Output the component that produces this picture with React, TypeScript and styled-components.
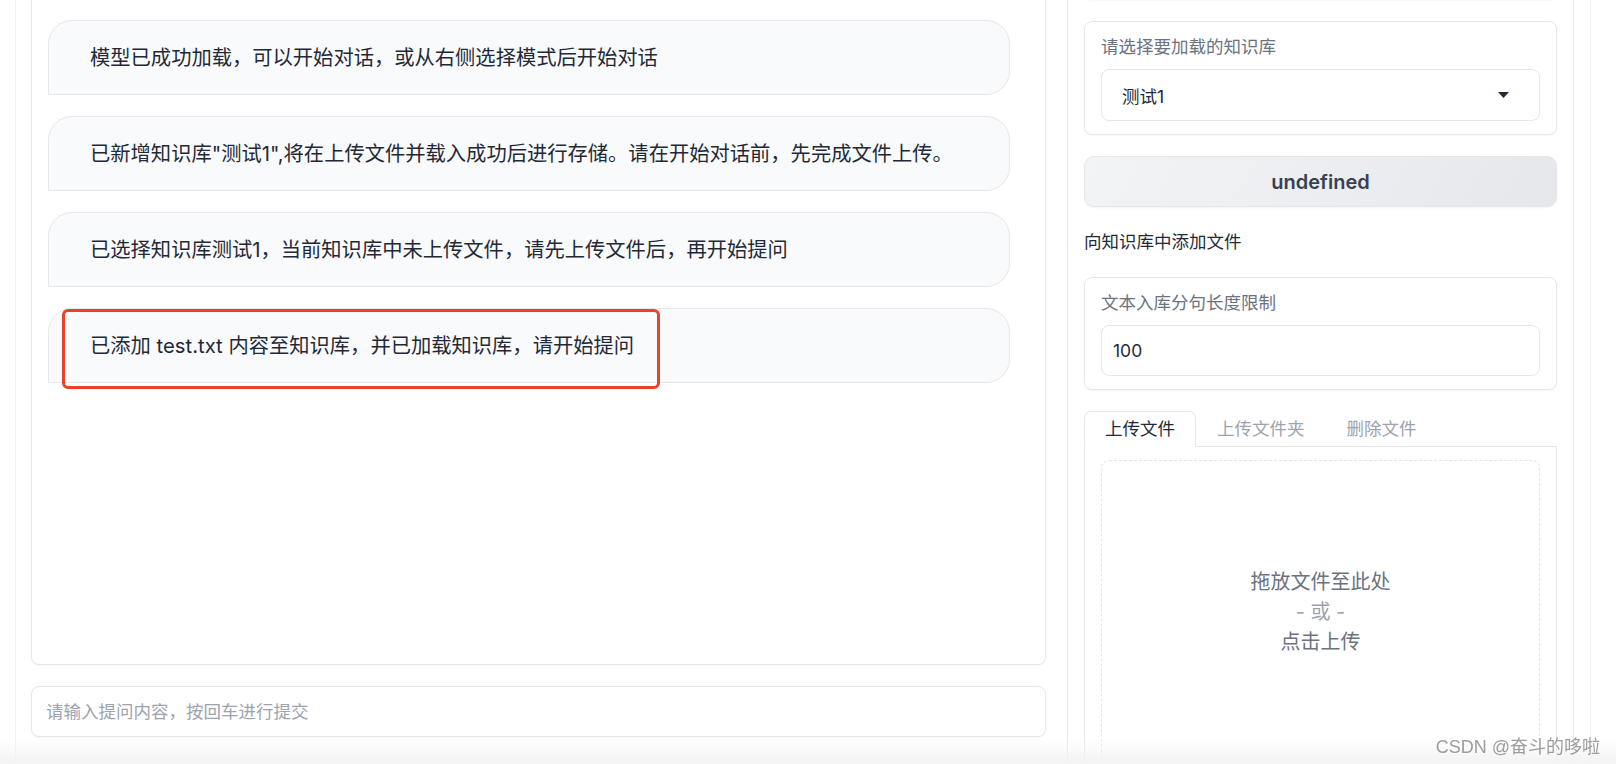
import React from 'react';
import styled, {createGlobalStyle} from 'styled-components';

const GlobalStyle = createGlobalStyle`
  html, body {
    margin: 0;
    overflow: hidden;
    background: #ffffff;
  }
  body {
    font-family: Inter, "Noto Sans CJK SC", sans-serif;
    color: #1f2937;
  }
`;

const messages = [
  '模型已成功加载，可以开始对话，或从右侧选择模式后开始对话',
  '已新增知识库"测试1",将在上传文件并载入成功后进行存储。请在开始对话前，先完成文件上传。',
  '已选择知识库测试1，当前知识库中未上传文件，请先上传文件后，再开始提问',
  '已添加 test.txt 内容至知识库，并已加载知识库，请开始提问',
];

const tabs = ['上传文件', '上传文件夹', '删除文件'];

const Page = styled.div`
  display: flex;
  gap: 21px;
  margin: -38px 25px 0 15px;
  padding: 0 16px 40px 15px;
  border-left: 1px solid #eef0f3;
  border-right: 1px solid #eef0f3;
`;

const ChatColumn = styled.div`
  flex: 1;
  min-width: 0;
  display: flex;
  flex-direction: column;
  gap: 21px;
`;

const ChatPanel = styled.div`
  height: 703px;
  box-sizing: border-box;
  display: flex;
  flex-direction: column;
  gap: 21px;
  padding: 57px 35px 16px 16px;
  border: 1px solid #e5e7eb;
  border-radius: 8px;
  background: #fff;
  box-shadow: 0 1px 2px rgba(0, 0, 0, 0.04);
`;

const Bubble = styled.div`
  position: relative;
  min-width: 0;
  padding: 21px 30px 21px 41px;
  font-size: 20.3px;
  line-height: 31px;
  white-space: nowrap;
  color: #1f2937;
  background: #f9fafb;
  border: 1px solid #e5e7eb;
  border-radius: 24px 24px 24px 0;
`;

const Highlight = styled.div`
  position: absolute;
  left: 13px;
  top: 0;
  width: 598px;
  height: 80px;
  box-sizing: border-box;
  border: 3px solid #e8412c;
  border-radius: 6px;
  pointer-events: none;
`;

const PromptInput = styled.input`
  height: 51px;
  box-sizing: border-box;
  padding: 0 14px;
  font: inherit;
  font-size: 17.5px;
  color: #1f2937;
  border: 1px solid #e5e7eb;
  border-radius: 8px;
  outline: none;
  box-shadow: 0 1px 2px rgba(0, 0, 0, 0.04);

  &::placeholder {
    color: #9ca3af;
  }
`;

const SideColumn = styled.div`
  width: 507px;
  flex-shrink: 0;
  box-sizing: border-box;
  display: flex;
  flex-direction: column;
  gap: 21px;
  padding: 16px;
  border: 1px solid #e5e7eb;
  border-radius: 8px;
  background: #fff;
`;

const StubCard = styled.div`
  height: 21px;
  box-sizing: border-box;
  border: 1px solid #e5e7eb;
  border-radius: 8px;
  box-shadow: 0 1px 2px rgba(0, 0, 0, 0.04);
`;

const Card = styled.div`
  box-sizing: border-box;
  display: flex;
  flex-direction: column;
  gap: 10px;
  padding: 13px 16px;
  border: 1px solid #e5e7eb;
  border-radius: 8px;
  background: #fff;
  box-shadow: 0 1px 2px rgba(0, 0, 0, 0.04);
`;

const Label = styled.div`
  font-size: 17.5px;
  line-height: 24px;
  color: #6b7280;
`;

const Select = styled.div`
  height: 52px;
  box-sizing: border-box;
  display: flex;
  align-items: center;
  justify-content: space-between;
  padding: 0 30px 0 20px;
  font-size: 17.5px;
  color: #1f2937;
  border: 1px solid #e5e7eb;
  border-radius: 8px;
  background: #fff;
`;

const NumberInput = styled.input`
  height: 51px;
  box-sizing: border-box;
  padding: 0 11px;
  font: inherit;
  font-size: 17.5px;
  color: #1f2937;
  border: 1px solid #e5e7eb;
  border-radius: 8px;
  outline: none;
`;

const ActionButton = styled.button`
  height: 51px;
  font: inherit;
  font-size: 20px;
  font-weight: 600;
  color: #374151;
  border: 1px solid #e5e7eb;
  border-radius: 10px;
  background: linear-gradient(120deg, #f3f4f6, #e5e7eb);
  box-shadow: 0 1px 2px rgba(0, 0, 0, 0.05);
`;

const SectionTitle = styled.div`
  font-size: 17.5px;
  line-height: 28px;
  color: #1f2937;
`;

const Tabs = styled.div`
  display: flex;
  flex-direction: column;
`;

const TabBar = styled.div`
  display: flex;
`;

const Tab = styled.div<{$active?: boolean}>`
  position: relative;
  z-index: 1;
  height: 36px;
  box-sizing: border-box;
  padding: 0 20px;
  font-size: 17.5px;
  line-height: 34px;
  color: ${p => (p.$active ? '#1f2937' : '#9ca3af')};
  border: 1px solid ${p => (p.$active ? '#e5e7eb' : 'transparent')};
  border-bottom-color: ${p => (p.$active ? '#fff' : 'transparent')};
  border-radius: 7px 7px 0 0;
  background: ${p => (p.$active ? '#fff' : 'transparent')};
  margin-bottom: -1px;
`;

const TabPanel = styled.div`
  padding: 13px 16px 16px 16px;
  border: 1px solid #e5e7eb;
`;

const DropZone = styled.div`
  height: 302px;
  display: flex;
  flex-direction: column;
  align-items: center;
  justify-content: center;
  font-size: 20px;
  line-height: 30px;
  color: #6b7280;
  border: 1px dashed #e3e5e8;
  border-radius: 8px;
`;

const DropHint = styled.span<{$muted?: boolean}>`
  color: ${p => (p.$muted ? '#9ca3af' : '#6b7280')};
`;

const BottomFade = styled.div`
  position: fixed;
  left: 0;
  right: 0;
  bottom: 0;
  height: 24px;
  background: linear-gradient(to bottom, rgba(242, 242, 243, 0), #f2f2f3);
  pointer-events: none;
`;

const Watermark = styled.div`
  position: fixed;
  right: 16px;
  bottom: 6px;
  font-family: "Liberation Sans", "Noto Sans CJK SC", sans-serif;
  font-size: 18px;
  color: rgba(140, 140, 140, 0.85);
  pointer-events: none;
`;

const Caret = () => (
  <svg width="11" height="6" viewBox="0 0 11 6">
    <path d="M0 0h11L5.5 6z" fill="#1f2937" />
  </svg>
);

export default function App() {
  return (
    <>
      <GlobalStyle />
      <Page>
        <ChatColumn>
          <ChatPanel>
            {messages.map((m, i) => (
              <Bubble key={i}>
                {m}
                {i === messages.length - 1 && <Highlight />}
              </Bubble>
            ))}
          </ChatPanel>
          <PromptInput placeholder="请输入提问内容，按回车进行提交" />
        </ChatColumn>

        <SideColumn>
          <StubCard />
          <Card>
            <Label>请选择要加载的知识库</Label>
            <Select>
              <span>测试1</span>
              <Caret />
            </Select>
          </Card>
          <ActionButton>undefined</ActionButton>
          <SectionTitle>向知识库中添加文件</SectionTitle>
          <Card>
            <Label>文本入库分句长度限制</Label>
            <NumberInput defaultValue="100" readOnly />
          </Card>
          <Tabs>
            <TabBar>
              {tabs.map((t, i) => (
                <Tab key={t} $active={i === 0}>
                  {t}
                </Tab>
              ))}
            </TabBar>
            <TabPanel>
              <DropZone>
                <DropHint>拖放文件至此处</DropHint>
                <DropHint $muted>- 或 -</DropHint>
                <DropHint>点击上传</DropHint>
              </DropZone>
            </TabPanel>
          </Tabs>
        </SideColumn>
      </Page>
      <BottomFade />
      <Watermark>CSDN @奋斗的哆啦</Watermark>
    </>
  );
}
